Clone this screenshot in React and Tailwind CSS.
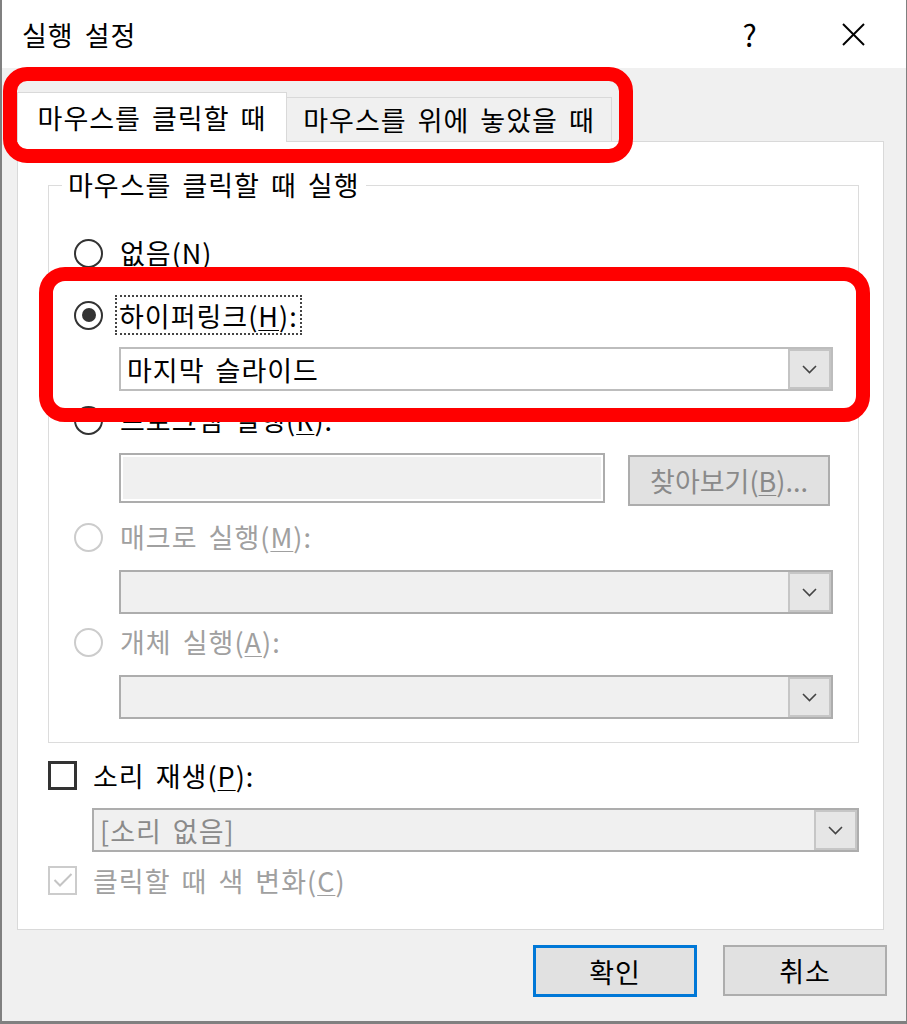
import React from "react";

function Chevron({ color = "#444" }) {
  return (
    <svg width="15" height="9" viewBox="0 0 15 9" fill="none">
      <polyline points="1,1 7.5,7.5 14,1" stroke={color} strokeWidth="1.6" />
    </svg>
  );
}

function Radio({ checked = false, disabled = false }) {
  return (
    <div
      className={
        "w-[29px] h-[29px] shrink-0 rounded-full bg-white flex items-center justify-center border-2 " +
        (disabled ? "border-[#cccccc]" : "border-[#333333]")
      }
    >
      {checked && <div className="w-[14px] h-[14px] rounded-full bg-[#333333]" />}
    </div>
  );
}

function Combo({ text, disabled = false, textClass = "" }) {
  return (
    <div
      className={
        "flex h-[44px] border-2 " +
        (disabled ? "border-[#adadad] bg-[#f0f0f0]" : "border-[#bdbdbd] bg-white")
      }
    >
      <div className={"flex-1 flex items-center pl-[6px] leading-none " + textClass}>{text}</div>
      <div
        className={
          "w-[43px] flex items-center justify-center border-2 " +
          (disabled ? "border-[#c6c6c6] bg-[#e6e6e6]" : "border-[#c4c4c4] bg-[#e5e5e5]")
        }
      >
        <Chevron />
      </div>
    </div>
  );
}

function RadioRow({ label, mn, suffix = "", checked, disabled, focus }) {
  const color = disabled ? "text-[#a0a0a0]" : "text-black";
  const content = (
    <span className={"leading-none " + color}>
      {label}(<span className="underline underline-offset-[3px] decoration-1">{mn}</span>){suffix}
    </span>
  );
  return (
    <div className="h-[40px] flex items-center">
      <Radio checked={checked} disabled={disabled} />
      {focus ? (
        <div className="ml-[12px] h-[40px] px-[2px] flex items-center border-2 border-dotted border-[#444]">
          {content}
        </div>
      ) : (
        <div className="ml-[17px]">{content}</div>
      )}
    </div>
  );
}

export default function App() {
  return (
    <div className="relative w-[907px] h-[1024px] bg-[#f0f0f0] border-l-2 border-r border-b-[3px] border-[#808080] overflow-hidden font-['Noto_Sans_CJK_KR','Noto_Sans_CJK_JP',sans-serif] text-[27px] tracking-[1px] [word-spacing:4px] text-black">
      {/* Title bar */}
      <div className="h-[68px] bg-white flex items-center pl-[20px]">
        <span className="leading-none">실행 설정</span>
        <span className="ml-auto w-[30px] text-center text-[30px] leading-none">?</span>
        <div className="ml-[65px] mr-[30px] w-[46px] flex items-center justify-center">
          <svg width="23" height="23" viewBox="0 0 23 23">
            <line x1="1" y1="1" x2="22" y2="22" stroke="#000" strokeWidth="2" />
            <line x1="22" y1="1" x2="1" y2="22" stroke="#000" strokeWidth="2" />
          </svg>
        </div>
      </div>

      {/* Body */}
      <div className="pt-[24px] pl-[15px] pr-[19px]">
        {/* Tabs */}
        <div className="flex items-end h-[49px]">
          <div className="relative z-10 -mb-px h-[50px] w-[270px] bg-white border border-b-0 border-[#d9d9d9] flex items-center justify-center leading-none">
            마우스를 클릭할 때
          </div>
          <div className="h-[44px] w-[325px] bg-[#f0f0f0] border-t border-r border-[#d9d9d9] flex items-center justify-center leading-none">
            마우스를 위에 놓았을 때
          </div>
        </div>

        {/* Panel */}
        <div className="w-[867px] bg-white border border-[#d9d9d9] pt-[43px] pl-[30px] pr-[24px] pb-[29px]">
          {/* Group box */}
          <div className="relative border border-[#dcdcdc] pt-[47px] pb-[23px] pl-[25px] pr-[25px]">
            <span className="absolute left-[13px] top-[-19px] bg-white px-[6px] leading-[36px]">
              마우스를 클릭할 때 실행
            </span>

            <RadioRow label="없음" mn="N" />
            <div className="mt-[22px]">
              <RadioRow label="하이퍼링크" mn="H" suffix=":" checked focus />
            </div>
            <div className="mt-[12px] ml-[45px]">
              <Combo text="마지막 슬라이드" />
            </div>
            <div className="mt-[9px]">
              <RadioRow label="프로그램 실행" mn="R" suffix=":" />
            </div>
            <div className="mt-[13px] ml-[45px] flex items-start h-[53px]">
              <div className="w-[486px] h-[50px] border-2 border-[#adadad] bg-[#f0f0f0] shadow-[inset_0_0_0_2px_#ffffff]" />
              <div className="ml-[23px] mt-[2px] w-[202px] h-[51px] border-2 border-[#adadad] bg-[#e1e1e1] flex items-center justify-center leading-none text-[#8a8a8a] tracking-normal">
                찾아보기(<span className="underline underline-offset-[3px] decoration-1">B</span>)...
              </div>
            </div>
            <div className="mt-[11px]">
              <RadioRow label="매크로 실행" mn="M" suffix=":" disabled />
            </div>
            <div className="mt-[13px] ml-[45px]">
              <Combo text="" disabled />
            </div>
            <div className="mt-[8px]">
              <RadioRow label="개체 실행" mn="A" suffix=":" disabled />
            </div>
            <div className="mt-[13px] ml-[45px]">
              <Combo text="" disabled />
            </div>
          </div>

          {/* Sound */}
          <div className="mt-[12px] h-[40px] flex items-center">
            <div className="w-[29px] h-[29px] border-[3px] border-[#333333] bg-white shrink-0" />
            <span className="ml-[16px] leading-none">
              소리 재생(<span className="underline underline-offset-[3px] decoration-1">P</span>):
            </span>
          </div>
          <div className="mt-[13px] ml-[44px]">
            <Combo text="[소리 없음]" disabled textClass="text-[#8a8a8a] pl-[6px]" />
          </div>
          <div className="mt-[8px] h-[40px] flex items-center">
            <div className="w-[29px] h-[29px] border-2 border-[#cccccc] bg-white shrink-0 flex items-center justify-center">
              <svg width="20" height="16" viewBox="0 0 20 16" fill="none">
                <polyline points="1.5,8 7,13.5 18.5,2" stroke="#c4c4c4" strokeWidth="2" />
              </svg>
            </div>
            <span className="ml-[16px] leading-none text-[#a0a0a0]">
              클릭할 때 색 변화(<span className="underline underline-offset-[3px] decoration-1">C</span>)
            </span>
          </div>
        </div>

        {/* Buttons */}
        <div className="mt-[15px] flex justify-end gap-[26px]">
          <div className="w-[164px] h-[52px] border-[3px] border-[#0078d7] bg-[#e1e1e1] flex items-center justify-center leading-none">
            확인
          </div>
          <div className="w-[164px] h-[51px] border-2 border-[#adadad] bg-[#e1e1e1] flex items-center justify-center leading-none">
            취소
          </div>
        </div>
      </div>

      {/* Red highlight overlays */}
      <div className="absolute left-[1px] top-[67px] w-[630px] h-[96px] border-[14px] border-[#ff0000] rounded-[24px] pointer-events-none" />
      <div className="absolute left-[37px] top-[267px] w-[831px] h-[155px] border-[14px] border-[#ff0000] rounded-[26px] pointer-events-none" />
    </div>
  );
}
